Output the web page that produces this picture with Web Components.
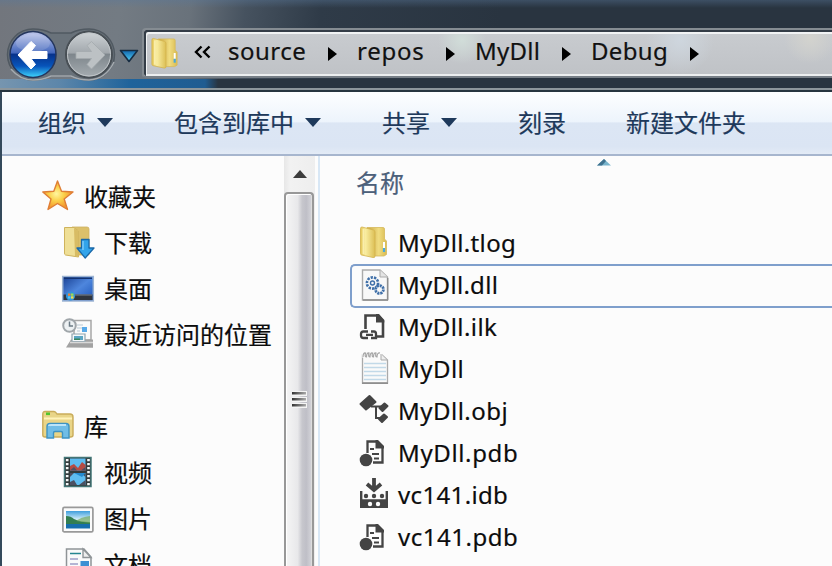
<!DOCTYPE html>
<html lang="zh-CN"><head><meta charset="utf-8"><title>Debug</title>
<style>
html,body{margin:0;height:100%;overflow:hidden}
body{font:24px/32px "Noto Sans","Noto Sans CJK SC",sans-serif;color:#0c0c0c;-webkit-text-stroke:.2px currentColor}
</style></head><body>
<explorer-window>
  <address-bar slot="top"></address-bar>
  <tool-bar slot="tools">
    <tool-item menu>组织</tool-item><tool-item menu>包含到库中</tool-item><tool-item menu>共享</tool-item><tool-item>刻录</tool-item><tool-item>新建文件夹</tool-item>
  </tool-bar>
  <nav-pane slot="body">
    <nav-item root icon="star">收藏夹</nav-item>
    <nav-item icon="download">下载</nav-item>
    <nav-item icon="desktop">桌面</nav-item>
    <nav-item icon="recent">最近访问的位置</nav-item>
    <nav-item root gap icon="library">库</nav-item>
    <nav-item icon="video">视频</nav-item>
    <nav-item icon="picture">图片</nav-item>
    <nav-item icon="document">文档</nav-item>
  </nav-pane>
  <scroll-bar slot="body"></scroll-bar>
  <file-pane slot="body">
    <file-row icon="folder" w="118">MyDll.tlog</file-row>
    <file-row icon="dll" selected w="100">MyDll.dll</file-row>
    <file-row icon="ilk" w="99">MyDll.ilk</file-row>
    <file-row icon="note" w="66">MyDll</file-row>
    <file-row icon="obj" w="110">MyDll.obj</file-row>
    <file-row icon="pdb" w="120">MyDll.pdb</file-row>
    <file-row icon="idb" w="110">vc141.idb</file-row>
    <file-row icon="pdb" w="120">vc141.pdb</file-row>
  </file-pane>
</explorer-window>
<script>
const ICONS = {
folder:`<defs><linearGradient id="a"><stop stop-color="#e3c555"/><stop offset=".35" stop-color="#f9eda0"/><stop offset="1" stop-color="#dcbf55"/></linearGradient><linearGradient id="b"><stop stop-color="#c8a440"/><stop offset=".6" stop-color="#f0dc80"/><stop offset="1" stop-color="#d9bb52"/></linearGradient></defs>
<path d="M9 1.500H25Q26.500 1.500 26.500 3V13L28.500 15V28.500L26 30H14z" fill="url(#b)" stroke="#d5b95a" stroke-width=".8"/><path d="M2.500 2.500Q2.500 1 4 1L15.500 4Q17 4.500 17 6V30Q17 32 15 31.500L3.500 29Q2.500 28.600 2.500 27.500z" fill="url(#a)" stroke="#d3b34d" stroke-width=".8"/><path d="M5.500 3V28" stroke="#fff6bd" stroke-width="1.800" opacity=".7"/><path d="M26 16v6" stroke="#fff" stroke-width="2"/><path d="M26 22v4" stroke="#4aa8d8" stroke-width="2.200"/>`,
dll:`<path d="M4.500 1H22L29.500 8V31H4.500z" fill="#f8f8f8" stroke="#aaa" stroke-width="1.400"/><path d="M5 31h25M29.700 9v22" stroke="#8d8d8d" stroke-width="1.400"/><path d="M22 1V8h7.500" fill="#e4e4e4" stroke="#aaa"/><circle cx="14.500" cy="14" r="5.600" fill="none" stroke="#3f6fa8" stroke-width="2.600" stroke-dasharray="2.300 1.100"/><circle cx="14.500" cy="14" r="2" fill="none" stroke="#3f6fa8" stroke-width="1.400"/><circle cx="21.500" cy="20.500" r="3.900" fill="#f8f8f8" stroke="#3f6fa8" stroke-width="2.800" stroke-dasharray="2.200 .8"/>`,
ilk:`<path d="M7.500 19V5.500H20L25 11V26.500H19" fill="none" stroke="#444" stroke-width="2.600"/><path d="M18 4H21L26.300 10V12.500H18z" fill="#444"/><path d="M10 21.500H5.500Q3 21.500 3 24V25.500Q3 28 5.500 28H10M8 24.800H15M13 21.500H16Q18 21.500 18 24V28H13" fill="none" stroke="#444" stroke-width="2.300"/>`,
note:`<path d="M4.500 3H24L29.500 8V31H4.500z" fill="#fafafa" stroke="#aaa" stroke-width="1.300"/><path d="M4 31.200H30" stroke="#8e8e8e" stroke-width="1.600"/><path d="M6 11.500H28M6 15.500H28M6 19.500H28M6 23.500H28M6 27.500H28" stroke="#c2d9e8" stroke-width="1.500"/><path d="M4 5.500V1H24V5.500z" fill="#fcfcfc"/><path d="M5 5q0-4.500 2.500-4q-1 4 1 4q0-4.500 2.500-4q-1 4 1 4q0-4.500 2.500-4q-1 4 1 4q0-4.500 2.500-4q-1 4 1 4q0-4.500 3-4" fill="none" stroke="#a6a6a6" stroke-width="1.200"/><path d="M23 2V8h6" fill="#eee" stroke="#aaa"/>`,
obj:`<path d="M11.500 2L17.500 8L8 15.500L2.500 10z" fill="#444" stroke="#444" stroke-width="2" stroke-linejoin="round"/><path d="M13 12.500H24M18 12.500V24H23" fill="none" stroke="#444" stroke-width="2"/><path d="M26.500 9.500L29.500 12L24.500 17L21.500 14zM26 20.500L29 23L24 28L21 25z" fill="#444" stroke="#444" stroke-width="2" stroke-linejoin="round"/>`,
pdb:`<path d="M9.500 17V5.500H19L24.500 11V26.500H15" fill="none" stroke="#444" stroke-width="2.300"/><path d="M17.500 4H20L26 10V12.500H17.500z" fill="#444"/><path d="M12 13H16M14 18H21M16 22.500H21" stroke="#444" stroke-width="2"/><circle cx="8" cy="24" r="6.300" fill="#444"/>`,
idb:`<path d="M16 0V10M9 6L16 12L23 6" fill="none" stroke="#444" stroke-width="3.800"/><path d="M3.200 13V28.700H28.800V13M3 22.500H29" fill="none" stroke="#444" stroke-width="2.400"/><path d="M3 22H29V30H3z" fill="#444"/><g fill="#444"><circle cx="8" cy="18" r="2.200"/><circle cx="16" cy="18" r="2.200"/><circle cx="24" cy="18" r="2.200"/></g><g fill="#fff"><circle cx="12" cy="26" r="2.200"/><circle cx="20" cy="26" r="2.200"/></g>`,
star:`<defs><radialGradient id="s" cx=".45" cy=".45"><stop stop-color="#fff6a0"/><stop offset=".5" stop-color="#fbd04a"/><stop offset="1" stop-color="#f39a2e"/></radialGradient></defs><path d="M15.500 1L19.500 11.300L31 12L22.200 19L25.500 29.500L15.500 23.500L6 29.500L9 19L.800 12L11.800 11.300z" fill="url(#s)" stroke="#df7e36" stroke-width="1.400" stroke-linejoin="round"/>`,
download:`<path d="M10 1H25Q27 1 27 3V29H12z" fill="#dcc06a" stroke="#cdb163" stroke-width=".8"/><path d="M2.500 1.500H12L16.500 5V31L3.500 29Q2.500 28.700 2.500 27z" fill="#efdf96" stroke="#cfb35d" stroke-width="1"/><path d="M12 2L16.500 5V31L13 30z" fill="#d8bc64"/><path d="M19.500 13.500H27V22H32L23.200 32L15 22H19.500z" fill="#32a4ea" stroke="#1968a9" stroke-width="1.300" stroke-linejoin="round"/><path d="M21 15v9" stroke="#8ed6ff" stroke-width="1.200"/>`,
desktop:`<defs><linearGradient id="d" x2="1" y2="1"><stop stop-color="#183f92"/><stop offset=".5" stop-color="#4e86dd"/><stop offset="1" stop-color="#1d55b8"/></linearGradient></defs><path d="M.700 4.500H31.300V29H.700z" fill="url(#d)" stroke="#9db4d2" stroke-width="1.500"/><path d="M2 5.500H30V7H2z" fill="#123271"/><path d="M1.500 22.500H30.500V28H1.500z" fill="#30363f"/><path d="M12 23h18" stroke="#7c858f"/><circle cx="8.500" cy="24" r="4.600" fill="#3293d8"/><path d="M6 21.500h2.500v2.300H6z" fill="#f18039"/><path d="M9 21.500h2.500v2.300H9z" fill="#9bdd55"/><path d="M6 24.300h2.500v2.300H6z" fill="#50c8fa"/><path d="M9 24.300h2.500v2.300H9z" fill="#f8dd43"/>`,
recent:`<path d="M12 2.500H29V22H12z" fill="#fafafa" stroke="#a7a7a7" stroke-width="1.500"/><path d="M15 7h6M15 10h5M15 13h3" stroke="#b8c8d3"/><path d="M20 9h5v5h-5z" fill="#58a9e8"/><path d="M4 29.500L9 21.500H31V29.800z" fill="#a2a2a2"/><path d="M10 16H23V23.500H10z" fill="#f5f8fa" stroke="#8fa3ad" stroke-width="1.200"/><path d="M12 18h9v4h-9z" fill="#5ba6c4"/><path d="M12 20.500h6v1.500h-6z" fill="#38855c"/><path d="M8 24.500h23" stroke="#d8d8d8" stroke-width="1.500"/><circle cx="7.500" cy="7.500" r="6.300" fill="#edf1f3" stroke="#a0a6aa" stroke-width="2"/><path d="M7.500 3.500V8H11" fill="none" stroke="#6c7b85" stroke-width="1.500"/>`,
library:`<path d="M.800 5V4Q.800 1.500 3 1.500H12Q13.500 1.500 15 4H28Q31 4 31 7V25Q31 27 28.500 27H3Q.800 27 .800 25z" fill="#e9d588" stroke="#c9ac5a" stroke-width="1.400"/><path d="M2 8.500H30" stroke="#fff3ba" stroke-width="2"/><path d="M4 3.800H8" stroke="#51c52c" stroke-width="2.600"/><path d="M5 28V16.500Q5 13.500 8 13.500H24Q27 13.500 27 16.500V28H20.500V23Q20.500 21.500 19 21.500H13Q11.500 21.500 11.500 23V28z" fill="#70bde6" stroke="#3e93c3" stroke-width="1.400"/><path d="M7 16Q7 15 9 15H24" fill="none" stroke="#bce4f8" stroke-width="2"/>`,
video:`<path d="M2.500 1.500H29V30.500H2.500z" fill="#343b3c" stroke="#437576" stroke-width="1.500"/><path d="M8 2.500H23.500V14.500H8zM8 17H23.500V29H8z" fill="#5ebcf0"/><path d="M8 14.500V10L12 8L16 12L20 6L23.500 9V14.500z" fill="#b64b43"/><path d="M8 14.500L12 11L15 14.500M19 14.500L23.500 11V14.500M8 29V26L12 24L15 29zM17 29L23.500 24V29M8 17h4l-4 4M19 17h4.500v4z" fill="#4c5062"/><path d="M12 17L20 21L23.500 17z" fill="#258bd0"/><path d="M5.200 3V30M26.500 3V30" stroke="#f4f8f8" stroke-width="2.600" stroke-dasharray="2.300 1.700"/>`,
picture:`<defs><linearGradient id="p" x2="0" y2="1"><stop stop-color="#3f9edc"/><stop offset=".5" stop-color="#d9f1fa"/><stop offset="1" stop-color="#fff"/></linearGradient></defs><rect x=".9" y="5.400" width="30" height="24.500" rx="1.500" fill="#fbfbfb" stroke="#999" stroke-width="1.700"/><path d="M4 9H28V26.500H4z" fill="url(#p)"/><path d="M4 22V14Q9 14 12 17Q18 20 28 20V24H4z" fill="#337e51"/><path d="M14 19Q19 15 28 14V21z" fill="#73a860" opacity=".7"/><path d="M4 22H28V26.500H4z" fill="#176eac"/>`,
document:`<path d="M4.500 1H22L29 9V33H4.500z" fill="#fafafa" stroke="#8f9497" stroke-width="1.500"/><path d="M21 1V9.500H29z" fill="#eee" stroke="#8f9497" stroke-width="1.400"/><path d="M8 5.500H19" stroke="#268690" stroke-width="1.500"/><path d="M8 11H16M8 16H16" stroke="#9d9fc8" stroke-width="1.500"/><path d="M18.500 13H27V20H18.500z" fill="#3c8fd3"/>`
};
function define(name, css, html, setup){
  customElements.define(name, class extends HTMLElement{
    connectedCallback(){
      if(this.shadowRoot) return;
      this.attachShadow({mode:'open'}).innerHTML = `<style>*{box-sizing:border-box}:host{box-sizing:border-box;display:block}${css}</style>` + (typeof html==='function'?html(this):html);
      if(setup) setup(this);
    }
  });
}
define('shell-icon', ':host{width:32px;height:32px;flex:none}svg{display:block;overflow:visible}', h=>`<svg width="32" height="32" viewBox="0 0 32 32">${ICONS[h.getAttribute('name')]}</svg>`);
/* Spreads its text over the width given in "w". */
define('fit-text', ':host{flex:none;white-space:nowrap}span{display:inline-block}', '<span><slot></slot></span>', h=>{
  const w=+h.getAttribute('w'), n=h.textContent.length, s=h.shadowRoot.querySelector('span');
  const natural=s.getBoundingClientRect().width;
  s.style.letterSpacing=((w-natural)/(n-.5))+'px'; h.style.width=w+'px';
});
define('explorer-window', ':host{display:flex;flex-direction:column;height:566px;overflow:hidden;background:#34495b}.client{display:flex;flex-direction:column;flex:1;min-height:0;margin-left:2px;background:#fcfcfc}.body{display:flex;flex:1;min-height:0;overflow:hidden}', '<slot name="top"></slot><div class="client"><slot name="tools"></slot><div class="body"><slot name="body"></slot></div></div>');
define('address-bar', `
:host{display:flex;height:92px;align-items:flex-start;padding-top:28px;
background:linear-gradient(#8d969b,#8d969b) 0 88px/100% 2px no-repeat,linear-gradient(#27353f,#27353f) 0 90px/100% 2px no-repeat,
linear-gradient(90deg,#7695af 0,#5c86aa 60px,#1f639b 130px,#205c91 205px,#293440 218px) 0 79px/100% 9px no-repeat,
linear-gradient(#5a789a66,transparent) 0 0/100% 8px no-repeat,
linear-gradient(97deg,#72767d 0,#737b83 120px,#69727b 190px,#46525f 245px,#2f3b48 320px,#293440 500px,#293440 100%)}
svg{flex:none;display:block}
.box{flex:1;height:50px;display:flex;align-items:center;border:2px solid #858c92;border-right:0;border-bottom-color:#777f87;border-radius:4px 0 0 4px;box-shadow:inset 2px 2px #343d47,inset 3px 4px #f1f3f4,inset 0 -2px #eceeef;
background:radial-gradient(circle at 318px 10px,#d1ddd9 0,transparent 24px),radial-gradient(circle at 536px 10px,#ced6de 0,transparent 34px),radial-gradient(circle at 666px 8px,#d3d3ce 0,transparent 26px),linear-gradient(#c9ccd0,#bfc2c6)}
shell-icon{margin:-1px 0 0 5px;transform:scale(.97)}
.c{display:flex;align-items:center;color:#111;height:32px;margin-top:-4px}
.tri{width:0;height:0;border:7px solid transparent;border-left:9px solid #000;border-right:0;margin:5px 20px 0 22px}`,
`<svg width="142" height="60" viewBox="0 28 142 60"><defs>
<linearGradient id="u" x2="0" y2="1"><stop stop-color="#c0c8ec"/><stop offset=".46" stop-color="#4468bd"/><stop offset=".5" stop-color="#06328c"/><stop offset=".75" stop-color="#0754ba"/><stop offset="1" stop-color="#3fd8ff"/></linearGradient>
<linearGradient id="g" x2="0" y2="1"><stop stop-color="#cfd4d7"/><stop offset=".46" stop-color="#a2a8ad"/><stop offset=".5" stop-color="#7e868c"/><stop offset="1" stop-color="#a6adb1"/></linearGradient>
<linearGradient id="t" x2="0" y2="1"><stop stop-color="#1266ac"/><stop offset="1" stop-color="#53d2f8"/></linearGradient></defs>
<path d="M33 29Q43 29 51 33H71Q79 29 89 29A25.500 25.500 0 0 1 89 80Q79 80 71 76H51Q43 80 33 80A25.500 25.500 0 0 1 33 29z" fill="#69727a" stroke="#505961" stroke-width="1.500"/>
<path d="M11 69Q20 80 33 80Q43 80 51 76H71Q79 80 89 80Q106 79 114 62" fill="none" stroke="#a5abb0" stroke-width="1.500"/>
<circle cx="33" cy="54.500" r="23" fill="url(#u)" stroke="#24365d" stroke-width="1.500"/><ellipse cx="33" cy="43" rx="17" ry="9" fill="#fff" opacity=".14"/>
<path d="M18 55L31 41.500L35.500 45.500L31 51.500H47V58.500H31L35.500 64.500L31 69z" fill="#fff" stroke="#fff" stroke-width="1" stroke-linejoin="round"/>
<circle cx="89" cy="54.500" r="23" fill="url(#g)" stroke="#484f55" stroke-width="2"/><circle cx="89" cy="54.500" r="21.500" fill="none" stroke="#c2c7ca" stroke-width="1"/>
<path d="M105 55L91.500 41.500L87 45.500L91.500 51.500H76V58.500H91.500L87 64.500L91.500 69z" fill="#bcc1c4" stroke="#a3a9ad" stroke-width=".8" stroke-linejoin="round"/>
<path d="M120.500 50.500H137.500L129 61.500z" fill="url(#t)" stroke="#162c42" stroke-width="1.600" stroke-linejoin="round"/></svg>
<div class="box"><shell-icon name="folder"></shell-icon><div class="c"><svg style="margin:1px 16px 0 12px" width="19" height="16" viewBox="0 0 19 16"><path d="M8.500 2.500L3 8L8.500 13.500M16.500 2.500L11 8L16.500 13.500" fill="none" stroke="#000" stroke-width="2.400"/></svg>
<fit-text w="78">source</fit-text><i class="tri"></i><fit-text w="67">repos</fit-text><i class="tri"></i><fit-text w="65">MyDll</fit-text><i class="tri"></i><fit-text w="77">Debug</fit-text><i class="tri"></i></div></div>`);
define('tool-bar', ':host{display:flex;flex:none;align-items:center;gap:61px;height:64px;padding:0 0 1px 36px;border-bottom:2px solid #a7b6ce;background:linear-gradient(#fdfeff 0,#edf4fc 48%,#dce6f4 50%,#dbe5f4 88%,#e3ebf6);color:#1e395b}','<slot></slot>');
define('tool-item', ':host{display:flex;align-items:center;white-space:nowrap}:host(:last-child){margin-left:-1px}i{border:8px solid transparent;border-top:9px solid #1e395b;border-bottom:0;margin:0 0 0 11px}', h=>'<slot></slot>'+(h.hasAttribute('menu')?'<i></i>':''));
define('nav-pane', ':host{flex:none;width:282px;padding-top:18px;overflow:hidden}','<slot></slot>');
define('nav-item', ':host{display:flex;align-items:center;height:46px;padding-left:60px;gap:10px;white-space:nowrap}:host([root]){padding-left:40px}:host([gap]){margin-top:46px}shell-icon{margin-top:-2px}', h=>`<shell-icon name="${h.getAttribute('icon')}"></shell-icon><slot></slot>`);
define('scroll-bar', `:host{display:flex;flex-direction:column;flex:none;width:31px;background:linear-gradient(90deg,#e7e7e7,#f2f2f2 20%,#eee)}
.up{height:36px;flex:none;display:grid;place-items:center}svg{display:block}
.thumb{flex:1;width:30px;border:2px solid #989898;border-bottom:0;border-radius:4px 4px 0 0;box-shadow:inset 1px 1px #fff,inset -1px 0 #ddd;background:linear-gradient(90deg,#f5f5f5 0,#e8e8ea 45%,#c7c7cd 62%,#bfbfc7 78%,#d5d5da);padding:196px 0 0 6px}`,
`<div class="up"><svg width="14" height="8"><path d="M0 8L7 0L14 8z" fill="#3c3c3c"/></svg></div><div class="thumb"><svg width="15" height="20"><defs><linearGradient id="l"><stop stop-color="#333"/><stop offset="1" stop-color="#aaa"/></linearGradient></defs><path d="M0 1H15V6H0zM0 7H15V12H0zM0 13H15V18H0z" fill="#f4f4f4"/><path d="M0 2H14V4.500H0zM0 8H14V10.500H0zM0 14H14V16.500H0z" fill="url(#l)"/></svg></div>`);
define('file-pane', `:host{flex:1;margin-left:3px;border-left:2px solid #d8e7f5;padding-left:30px;min-width:0}
.head{height:65px;display:flex;align-items:flex-start;color:#4c607a;padding:11px 0 0 6px}
.sort{margin:-9px 0 0 193px;display:block}`, `<div class="head"><span>名称</span><svg class="sort" width="14" height="8"><path d="M0 7.500L7 1L14 7.500z" fill="#78b4cc"/><path d="M0 7.500L7 1L9 3L5 7.500z" fill="#3f718e"/></svg></div><slot></slot>`);
define('file-row', ':host{display:flex;align-items:center;height:42px;padding-left:8px;gap:8px;border:0 solid #7f9fcc}:host([selected]){height:44px;margin:1px 0 -3px;padding-bottom:3px;border-width:2px 0 2px 2px;border-radius:5px 0 0 5px;padding-left:6px}shell-icon{margin-top:0}fit-text{margin-top:1px}', h=>`<shell-icon name="${h.getAttribute('icon')}"></shell-icon><fit-text w="${h.getAttribute('w')}">${h.textContent}</fit-text>`);
</script>
</body></html>
